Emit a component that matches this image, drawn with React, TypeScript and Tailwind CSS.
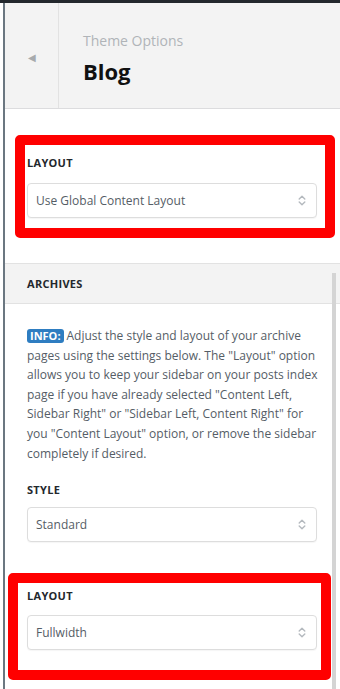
const UpDown = () => (
  <svg width="8" height="11" viewBox="0 0 8 11" fill="none" stroke="#b4b9be" strokeWidth="1.4" strokeLinecap="round" strokeLinejoin="round">
    <path d="M1.2 4 L4 1.3 L6.8 4" />
    <path d="M1.2 7 L4 9.7 L6.8 7" />
  </svg>
);

const SelectBox = ({ value }: { value: string }) => (
  <div className="h-[35px] w-[290px] flex items-center justify-between pl-[8px] pr-[10px] border border-[#dddddd] rounded-[4px] bg-white shadow-[0_1px_1px_rgba(0,0,0,0.04)]">
    <span className="text-[12px] text-[#555d66]">{value}</span>
    <UpDown />
  </div>
);

const Label = ({ children }: { children: string }) => (
  <div className="text-[11px] leading-[16px] font-bold tracking-[0.3px] text-[#23282d] uppercase">{children}</div>
);

export default function App() {
  return (
    <div className="relative w-[340px] h-[689px] overflow-hidden bg-white font-['Open_Sans',sans-serif]">
      <div className="h-[3px] bg-[#23282d]" />
      <div className="pl-[3px] h-[686px]">
        <div className="h-full border-l-2 border-[#6b7781] flex flex-col">
          {/* header */}
          <div className="h-[106px] flex bg-[#f3f3f3] border-b border-[#dcdcde]">
            <div className="w-[54px] border-r border-[#e2e2e2] flex items-center justify-center">
              <span className="text-[10px] text-[#a7aaad] mt-[4px]">◀</span>
            </div>
            <div className="pl-[24px] flex flex-col pt-[28px]">
              <span className="text-[14px] leading-[20px] text-[#b0b4b8]">Theme Options</span>
              <span className="text-[22px] leading-[28px] font-bold text-[#111] mt-[6px]">Blog</span>
            </div>
          </div>

          {/* layout section */}
          <div className="h-[154px] px-[22px] pt-[46px]">
            <Label>LAYOUT</Label>
            <div className="mt-[12px]">
              <SelectBox value="Use Global Content Layout" />
            </div>
          </div>

          {/* archives */}
          <div className="flex-1 flex flex-col">
            <div className="h-[41px] flex items-center px-[22px] bg-[#f3f3f3] border-y border-[#e2e2e2]">
              <Label>ARCHIVES</Label>
            </div>
            <div className="px-[22px] pt-[22px]">
              <p className="text-[12px] leading-[19.6px] text-[#555d66] w-[292px]">
                <span className="inline-block bg-[#2e7dc1] text-white font-bold text-[11px] leading-[14px] px-[3px] rounded-[3px] mr-[3px]">INFO:</span>
                Adjust the style and layout of your archive pages using the settings below. The "Layout" option allows you to keep your sidebar on your posts index page if you have already selected "Content Left, Sidebar Right" or "Sidebar Left, Content Right" for you "Content Layout" option, or remove the sidebar completely if desired.
              </p>
              <div className="mt-[19px]">
                <Label>STYLE</Label>
              </div>
              <div className="mt-[9px]">
                <SelectBox value="Standard" />
              </div>
              <div className="mt-[46px]">
                <Label>LAYOUT</Label>
              </div>
              <div className="mt-[11px]">
                <SelectBox value="Fullwidth" />
              </div>
            </div>
          </div>
        </div>
      </div>

      {/* scrollbar */}
      <div className="absolute left-[332px] top-[273px] w-[4px] h-[416px] bg-[#d4d4d4]" />

      {/* annotation boxes */}
      <div className="absolute left-[15px] top-[135px] w-[320px] h-[103px] border-[10px] border-[#ff0000] rounded-[5px]" />
      <div className="absolute left-[8px] top-[573px] w-[323px] h-[107px] border-[10px] border-[#ff0000] rounded-[5px]" />
    </div>
  );
}
